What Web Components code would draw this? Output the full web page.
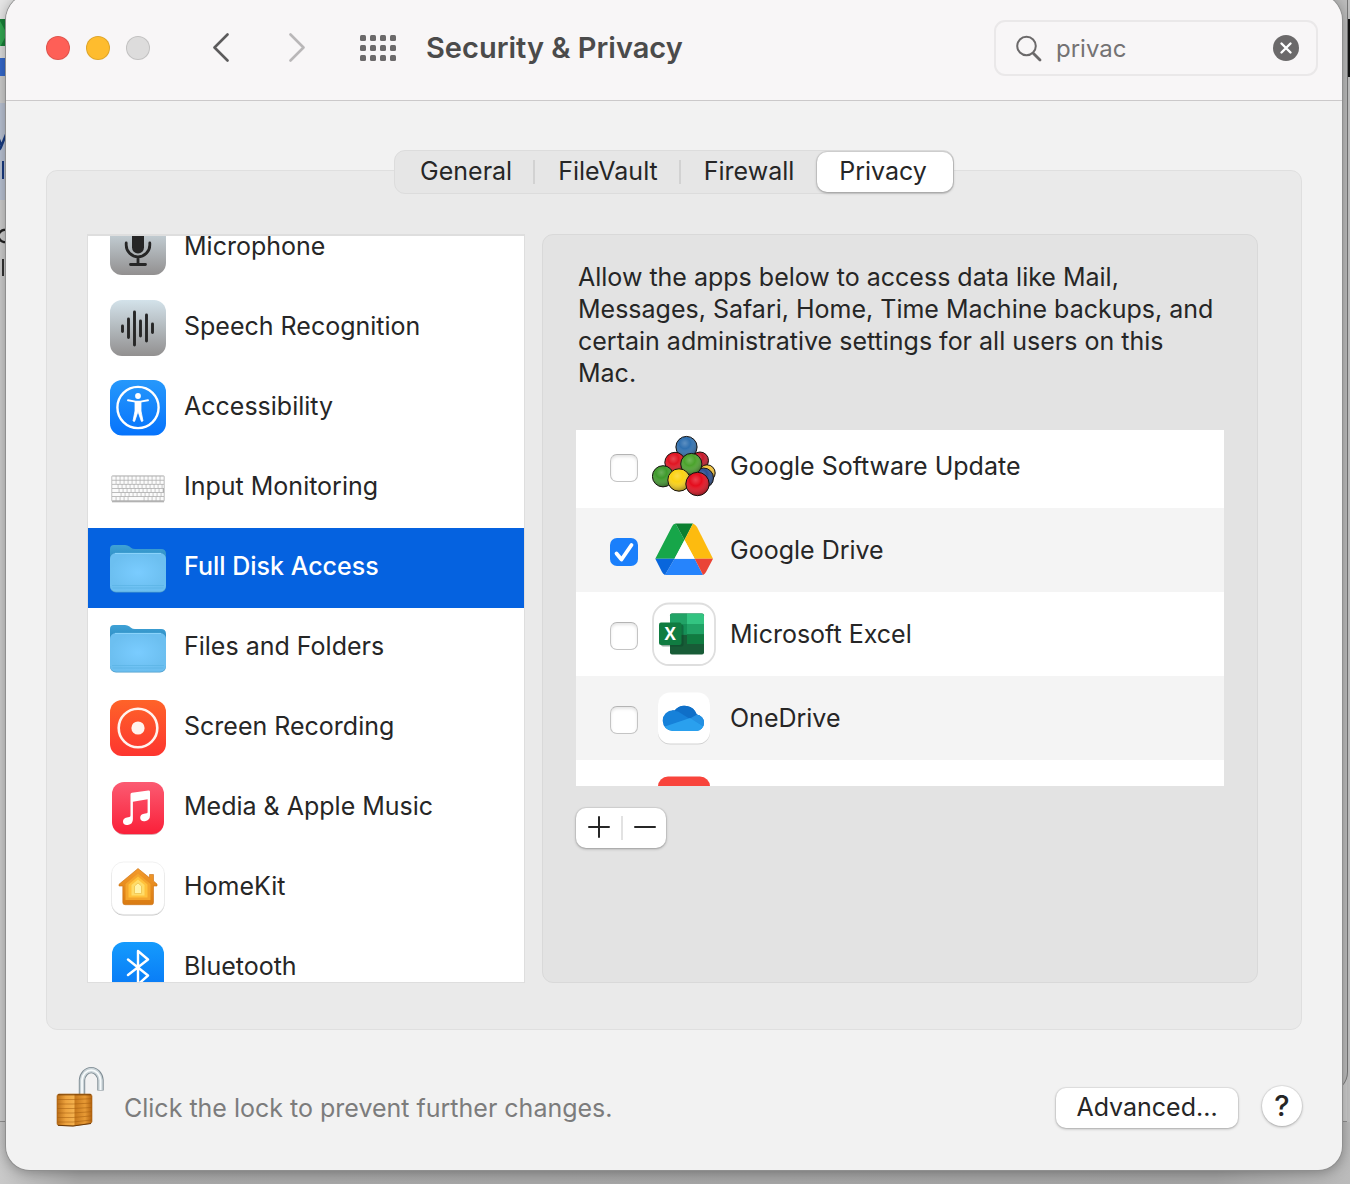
<!DOCTYPE html>
<html lang="en">
<head>
<meta charset="utf-8">
<title>Security &amp; Privacy</title>
<style>
  html, body { margin: 0; height: 100%; }
  body {
    font-family: Inter, "Liberation Sans", sans-serif;
    font-size: 25px;
    line-height: 32px;
    color: #262626;
    background: #a6a6a6;
    overflow: hidden;
  }
</style>
</head>
<body>
<desktop-stage>
  <mac-window>
    <window-toolbar slot="toolbar" heading="Security &amp; Privacy" query="privac"></window-toolbar>
    <segmented-tabs slot="tabs" items="General,FileVault,Firewall,Privacy" selected="Privacy"></segmented-tabs>
    <privacy-panel>
      <privacy-list slot="list">
        <privacy-item icon="microphone">Microphone</privacy-item>
        <privacy-item icon="speech">Speech Recognition</privacy-item>
        <privacy-item icon="accessibility">Accessibility</privacy-item>
        <privacy-item icon="keyboard">Input Monitoring</privacy-item>
        <privacy-item icon="folder" selected>Full Disk Access</privacy-item>
        <privacy-item icon="folder">Files and Folders</privacy-item>
        <privacy-item icon="record">Screen Recording</privacy-item>
        <privacy-item icon="music">Media &amp; Apple Music</privacy-item>
        <privacy-item icon="home">HomeKit</privacy-item>
        <privacy-item icon="bluetooth">Bluetooth</privacy-item>
      </privacy-list>
      <app-access slot="detail">
        <span slot="description">Allow the apps below to access data like Mail, Messages, Safari, Home, Time Machine backups, and certain administrative settings for all users on this Mac.</span>
        <app-row icon="updater">Google Software Update</app-row>
        <app-row icon="drive" checked>Google Drive</app-row>
        <app-row icon="excel">Microsoft Excel</app-row>
        <app-row icon="onedrive">OneDrive</app-row>
        <app-row icon="redapp"></app-row>
      </app-access>
    </privacy-panel>
    <window-footer slot="footer">Click the lock to prevent further changes.</window-footer>
  </mac-window>
</desktop-stage>

<script>
const define = (name, html, setup) => {
  const template = document.createElement('template');
  template.innerHTML = '<style>:host,*{box-sizing:border-box}button,input{font:inherit;color:inherit;margin:0}button{padding:0;border:0;background:none}svg{display:block}</style>' + html;
  customElements.define(name, class extends HTMLElement {
    constructor() {
      super();
      this.attachShadow({ mode: 'open' }).append(template.content.cloneNode(true));
    }
    connectedCallback() {
      if (setup && !this.ready) { this.ready = true; setup(this, this.shadowRoot); }
    }
  });
};

const gradient = (id, top, bottom) =>
  `<linearGradient id="${id}" x1="0" y1="0" x2="0" y2="1"><stop stop-color="${top}"/><stop offset="1" stop-color="${bottom}"/></linearGradient>`;
const ball = (x, y, r, color) =>
  `<circle cx="${x}" cy="${y}" r="${r}" fill="${color}"/><circle cx="${x}" cy="${y}" r="${r}" fill="url(#shine)" stroke="#16120f" stroke-width="1"/>`;
const keyRows = () => {
  let out = '';
  for (let row = 0; row < 6; row++) {
    const y = 16.5 + row * 4.1;
    const first = [3.5, 3.5, 5.5, 6.5, 8.5, 3.5][row];
    out += `<rect x="2.2" y="${y}" width="${first}" height="3.3"/>`;
    for (let x = 2.9 + first; x < 53; x += 4) {
      if (row === 5 && x > 18 && x < 34) continue;
      out += `<rect x="${x}" y="${y}" width="${Math.min(3.3, 53.8 - x)}" height="3.3"/>`;
    }
  }
  return out + '<rect x="18.4" y="37" width="15.3" height="3.3"/>';
};

const ICONS = {
  microphone: [56, `<defs>${gradient('g', '#d3e2ea', '#929090')}</defs><rect width="56" height="55" rx="12" fill="url(#g)"/>
    <rect x="22" y="5" width="12" height="28.500" rx="6" fill="#262626"/><path d="M16.200 23v2a11.800 11.800 0 0 0 23.600 0v-2M28 37v7M20.500 44.500h15" fill="none" stroke="#262626" stroke-width="2.800" stroke-linecap="round"/>`],
  speech: [56, `<defs>${gradient('g', '#d3e2ea', '#929090')}</defs><rect width="56" height="56" rx="12" fill="url(#g)"/>
    <path d="M12.500 26v5.500M18.500 19v18.500M24.500 12v33M30.500 21v15M36.500 15v26M42.500 24v8.500" stroke="#262626" stroke-width="2.900" stroke-linecap="round"/>`],
  accessibility: [56, `<defs>${gradient('g', '#2698fb', '#0673fc')}</defs><rect width="56" height="55.500" rx="12" fill="url(#g)"/>
    <circle cx="28" cy="27.500" r="20.600" fill="none" stroke="#fff" stroke-width="2.400"/><circle cx="28" cy="16" r="2.900" fill="#fff"/>
    <path d="M18 20.300l7.500 1.300h5l7.500-1.300" stroke="#fff" stroke-width="1.900" fill="none" stroke-linecap="round"/>
    <path d="M25 21.500h6v9.500l2 10-1.600.4-3.400-10-3.400 10-1.600-.4 2-10z" fill="#fff" stroke="#fff" stroke-width=".8" stroke-linejoin="round"/>`],
  keyboard: [56, `<rect x="1.500" y="15.500" width="53" height="26" rx="1.500" fill="#aeaeae" stroke="#cfcfcf" stroke-width=".8"/><path d="M2 41.800h52" stroke="#999" stroke-width=".8"/><g fill="#fbfbfb">${keyRows()}</g>`],
  folder: [56, `<defs>${gradient('g', '#3fa2d6', '#2583ba')}<radialGradient id="f"><stop stop-color="#7accff"/><stop offset="1" stop-color="#6cbff0"/></radialGradient></defs>
    <path d="M0 20V9q0-4 4-4h11q2.500 0 4.500 1.600l1.500 1.200Q22.500 9 25 9h26q5 0 5 5v12H0z" fill="url(#g)"/>
    <rect y="13" width="56" height="39.500" rx="6" fill="#4a9bc9"/><rect y="13" width="56" height="38.800" rx="6" fill="url(#f)"/><path d="M2 45.500h52M2.500 48h51" stroke="#5ab3e4" stroke-width=".7"/><path d="M5 13.400h46" stroke="#96dcff" stroke-width=".8"/>`],
  record: [56, `<defs>${gradient('g', '#fe6329', '#fd352f')}</defs><rect width="56" height="56" rx="12" fill="url(#g)"/>
    <circle cx="28" cy="28" r="19.300" fill="none" stroke="#fff3ee" stroke-width="2.600"/><circle cx="28" cy="28" r="6.600" fill="#fff3ee"/>`],
  music: [56, `<defs>${gradient('g', '#fb5b72', '#fa2039')}</defs><rect x="2.500" y="3.500" width="51" height="51.500" rx="12" fill="#d8a8ae"/><rect x="2" y="2" width="52" height="52" rx="12" fill="url(#g)"/>
    <path d="M20.500 14.500q0-1.400 1.400-1.700l16.500-2.300q1.600-.2 1.600 1.300v23.500q0 5.200-5 5.900-4.800.5-4.800-3.400 0-3.400 3.800-4.100l2.600-.5q1-.2 1-1.300V19.200l-14.700 2.500v17.500q0 5-5 5.700-4.900.6-4.900-3.400 0-3.300 3.900-4.100l2.500-.5q1.100-.2 1.100-1.400z" fill="#fff"/>`],
  home: [56, `<defs>${gradient('g', '#f39a2b', '#d97b12')}</defs><rect x="1.500" y="3.500" width="53" height="52" rx="12" fill="#c6c6c6"/><rect x="1.500" y="2" width="53" height="52.500" rx="12" fill="#fff" stroke="#e8e8e8" stroke-width=".6"/>
    <path d="M28 8.500L9 24.300v1.700h3.800v16.500q0 2.200 2.200 2.200h26.500q2 0 2-2.200V26H47v-2l-3.500-3V14.500h-4v3.300z" fill="url(#g)" stroke="#c96f12" stroke-width=".6" stroke-linejoin="round"/>
    <path d="M28 13.500L15.500 24v16h25V24z" fill="#f4a52d"/><path d="M28 16.500L18.500 24.500V37.500h19v-13z" fill="#ffc23c"/><path d="M28 19.500L21.500 25v10.500h13V25z" fill="#ffdc68"/><path d="M28 23l-3.500 3v7.500h7V26z" fill="#fff3a8" stroke="#edc34e" stroke-width=".8"/>`],
  bluetooth: [56, `<defs>${gradient('g', '#159bfd', '#0675f5')}</defs><rect x="2" y="2" width="52" height="52" rx="12" fill="url(#g)"/>
    <path d="M18 19.500l20 16L28 44.500v-33.500l10 8.500-20 15.500" fill="none" stroke="#fff" stroke-width="2.400" stroke-linejoin="round" stroke-linecap="round"/>`],
  updater: [64, `<defs><radialGradient id="shine" cx=".42" cy=".32" r=".75"><stop stop-color="#fff" stop-opacity=".22"/><stop offset=".35" stop-color="#fff" stop-opacity="0"/><stop offset="1" stop-color="#000" stop-opacity=".5"/></radialGradient></defs>
    ${ball(48, 26.5, 8.5, '#c5182a')}${ball(55, 39, 8.2, '#f5c53a')}${ball(51.5, 44, 10, '#2a4f91')}${ball(34.5, 13, 10.6, '#2f70b0')}${ball(23, 28.5, 10.2, '#e01522')}${ball(11, 42.3, 10.6, '#3f9a2c')}${ball(39.3, 30, 10.6, '#4ba32c')}${ball(27, 46, 11.2, '#fbd213')}${ball(45.5, 50, 11.7, '#e50d1d')}`],
  drive: [64, `<path d="M20 8.500L3.300 40.700H22.500L32.500 22 23.500 5.500Q21 6 20 8.500z" fill="#17a649"/>
    <path d="M23.500 5.500h17.500L32.500 22z" fill="#0b8030"/><path d="M41 5.500Q43.500 6.500 45 9l16 31.700H42.700L32.500 22z" fill="#fdbb0f"/>
    <path d="M22.500 40.700h20.200L51 57H13z" fill="#2684fc"/><path d="M3.300 40.700h19.200L13 57q-2-1-3-3z" fill="#0966dc"/><path d="M42.700 40.700H61L54 54q-1 2-3 3z" fill="#ea4436"/><path d="M32.500 22l10.200 18.700H22.500z" fill="#fff"/>`],
  excel: [64, `<rect x="1" y="1.500" width="62" height="61.500" rx="16" fill="#fff" stroke="#dedede" stroke-width="1.800"/>
    <rect x="18" y="11.500" width="34" height="41" rx="2" fill="#185c37"/><path d="M18 32.500V13.500q0-2 2-2h15v21z" fill="#21a366"/><path d="M35 11.500h15q2 0 2 2v8.500H35z" fill="#33c481"/><path d="M35 22h17v10.500H35z" fill="#21a366"/><path d="M18 22h17v10.500H18z" fill="#159057"/><path d="M35 32.500h17V42H35z" fill="#107c41"/>
    <rect x="9" y="22.500" width="22.500" height="22" rx="2" fill="#0b4527" opacity=".45"/><rect x="7" y="20.500" width="22.500" height="22.500" rx="2" fill="#107c41"/>
    <text x="18.200" y="37.500" text-anchor="middle" font-family="Open Sans, sans-serif" font-size="17" font-weight="700" fill="#fff">X</text>`],
  onedrive: [64, `<rect x="6" y="7.500" width="52" height="51" rx="12" fill="#d2d2d2"/><rect x="6" y="6.500" width="52" height="51" rx="12" fill="#fff"/>
    <clipPath id="c"><path d="M21 45a10.300 10.300 0 0 1 0-20.700q1 0 1.500.1a13 13 0 0 1 22.300 4.100A8.300 8.300 0 0 1 44.500 45z"/></clipPath>
    <g clip-path="url(#c)"><path d="M8 15h48v32H8z" fill="#1681d9"/><path d="M20 15h28v14.500l-10 3.500-12-7.500-6-1z" fill="#0f6fc8"/><path d="M38 32.500l7-4 12-1v16z" fill="#2490e2"/><path d="M10 41.500l28-9.500L54 42v5H10z" fill="#2aa0ee"/></g>`],
  redapp: [64, '<rect x="6" y="6.500" width="52" height="52" rx="10" fill="#f8443c"/>'],
};

define('mac-icon', `<style>:host{display:block;flex:none}</style><div></div>`, (el, root) => {
  const [size, body] = ICONS[el.getAttribute('name')];
  root.querySelector('div').innerHTML = `<svg width="${size}" height="${size}" viewBox="0 0 ${size} ${size}" aria-hidden="true">${body}</svg>`;
});

const placeIcon = (el, root) => {
  const icon = document.createElement('mac-icon');
  icon.setAttribute('name', el.getAttribute('icon'));
  root.querySelector('.icon').append(icon);
};

define('desktop-stage', `<style>
  :host{display:flex;position:relative;height:100vh;min-height:960px;overflow:hidden;isolation:isolate;background:linear-gradient(90deg,#c9c9c9 0,#a9a9a9 80px,#a4a4a4 90%,#bbb 100%)}
  .behind{position:absolute;z-index:-1;inset:0 2px 62px 0;background:#cdcdcd;border-bottom:1px solid #929292}
  .edge{position:absolute;z-index:-1;top:0;right:2px;bottom:92px;width:20px;background:#bdbdbd;border-right:1px solid #777;border-radius:0 0 20px 0}
  .far{position:absolute;z-index:-1;top:0;right:0;bottom:62px;width:3px;background:#c3c3c3}
  .far::before{content:"";position:absolute;top:19px;left:0;width:3px;height:58px;background:#111}
  svg{position:absolute;z-index:-1;top:0;left:0}
  slot{display:flex;flex:1}
</style>
<div class="behind"></div><div class="far"></div><div class="edge"></div>
<svg width="20" height="300" aria-hidden="true"><path d="M0 0h20v19H0z" fill="#e6e6e6"/><path d="M0 19h20v27H0z" fill="#188038"/><path d="M0 21l7 13-7 13z" fill="#34a853"/><path d="M0 46h20v12H0z" fill="#ddd"/><path d="M0 58h20v18H0z" fill="#3569cc"/><path d="M0 103h20v97H0z" fill="#b9c2d3"/>
<path d="M-4 132l5.500 13.500M7 132L1 147q-1 3-4 3" stroke="#173a80" stroke-width="2.400" fill="none"/><path d="M3 161v18" stroke="#173a80" stroke-width="2"/><path d="M8 231a6 6 0 1 0 0 10" stroke="#222" stroke-width="2.400" fill="none"/><path d="M3 259v17" stroke="#333" stroke-width="2"/></svg>
<slot></slot>`);

define('mac-window', `<style>
  :host{display:flex;flex-direction:column;flex:1;margin:-6px 8px 14px 6px;padding-top:6px;border-radius:26px 26px 24px 24px;overflow:hidden;box-shadow:0 0 0 1px #8f8f8f,0 2px 14px rgba(0,0,0,.35);background:linear-gradient(#f8f6f7 106px,#f2f2f2 106px)}
  main{flex:1;display:flex;flex-direction:column;padding:49px 40px 0;min-height:0}
  ::slotted([slot=tabs]){align-self:center;margin-bottom:-24px}
</style><slot name="toolbar"></slot><main><slot name="tabs"></slot><slot></slot></main><slot name="footer"></slot>`);

define('window-toolbar', `<style>
  :host{display:flex;align-items:center;height:101px;padding:0 24px 5px 40px;border-bottom:1px solid #cbc9ca;flex:none}
  .lights{display:flex;gap:16px}
  .lights button{width:24px;height:24px;border-radius:50%;border:1px solid rgba(0,0,0,.12)}
  .nav{display:flex;gap:60px;margin:0 55px 0 63px}
  h1{margin:0 auto 0 30px;font-size:29px;line-height:36px;font-weight:600;color:#4b4b4b;white-space:nowrap}
  label{display:flex;align-items:center;width:324px;height:56px;padding:0 17px 0 20px;border:2px solid #eae8e9;border-radius:11px;color:#6e6c6d}
  input{flex:1;min-width:0;border:0;outline:0;background:none;padding:2px 0 0;margin-left:14px;font-size:24px;color:#747273}
</style>
<div class="lights"><button aria-label="Close" style="background:#fe5f57"></button><button aria-label="Minimize" style="background:#febc2e"></button><button aria-label="Zoom" style="background:#dddcdc"></button></div>
<div class="nav"><button aria-label="Back"><svg width="16" height="30" viewBox="0 0 16 30"><path d="M14.500 1.500L1.500 14.500 14.500 27.500" fill="none" stroke="#5c5b5c" stroke-width="2.600" stroke-linecap="round" stroke-linejoin="round"/></svg></button>
<button aria-label="Forward"><svg width="16" height="30" viewBox="0 0 16 30"><path d="M1.500 1.500L14.500 14.500 1.500 27.500" fill="none" stroke="#b9b7b8" stroke-width="2.600" stroke-linecap="round" stroke-linejoin="round"/></svg></button></div>
<button aria-label="Show all"><svg class="grid" width="36" height="28" viewBox="0 0 36 28" fill="#6b696a"></svg></button>
<h1></h1>
<label><svg width="26" height="28" viewBox="0 0 26 28" fill="none" stroke="#6b696a" stroke-linecap="round"><circle cx="10.500" cy="12" r="9.300" stroke-width="2"/><path d="M17.500 19.500l6.500 6.500" stroke-width="2.800"/></svg>
<input type="text" aria-label="Search">
<button aria-label="Clear search"><svg width="26" height="26" viewBox="0 0 26 26"><circle cx="13" cy="13" r="13" fill="#6b696a"/><path d="M8.500 8.500l9 9m0-9l-9 9" stroke="#fff" stroke-width="2.400" stroke-linecap="round"/></svg></button></label>`, (el, root) => {
  root.querySelector('h1').textContent = el.getAttribute('heading');
  root.querySelector('input').value = el.getAttribute('query');
  let dots = '';
  for (let y = 0; y < 3; y++) for (let x = 0; x < 4; x++) dots += `<rect x="${x * 10}" y="${1 + y * 10}" width="6" height="6" rx="1.500"/>`;
  root.querySelector('.grid').innerHTML = dots;
});

define('segmented-tabs', `<style>
  :host{display:flex;position:relative;height:44px;padding:1px 0;border:1px solid #dcdcdc;border-radius:11px;background:#e6e6e6}
  button{position:relative;height:40px;padding:0 23px 2px;border-radius:10px}
  button:first-of-type{padding-left:25px}
  button[aria-selected=true]{background:#fff;box-shadow:0 0 0 1px rgba(0,0,0,.07),0 1px 3px rgba(0,0,0,.3);padding:0 26px 2px 22px}
  .rule::after{content:"";position:absolute;right:0;top:8px;width:2px;height:24px;background:#d2d2d2}
</style>`, (el, root) => {
  el.setAttribute('role', 'tablist');
  const names = el.getAttribute('items').split(',');
  names.forEach((name, i) => {
    const tab = document.createElement('button');
    tab.textContent = name;
    tab.setAttribute('role', 'tab');
    tab.setAttribute('aria-selected', name === el.getAttribute('selected'));
    if (i < names.length - 2) tab.className = 'rule';
    root.append(tab);
  });
});

define('privacy-panel', `<style>
  :host{flex:1;min-height:0;display:grid;grid-template:minmax(0,1fr)/438px minmax(0,1fr);gap:17px;padding:63px 43px 46px 40px;border:1px solid #dfdfdf;border-radius:11px;background:#eaeaea}
</style><slot name="list"></slot><slot name="detail"></slot>`);

define('privacy-list', `<style>
  :host{display:block;overflow:hidden;border:1px solid #dedede;border-top-width:2px;background:#fff}
  div{margin-top:-28px}
</style><div role="list"><slot></slot></div>`);

define('privacy-item', `<style>
  :host{display:block}
  button{display:flex;align-items:center;gap:18px;width:100%;height:80px;padding:0 22px;text-align:left}
  .name{padding-bottom:4px;line-height:20px;white-space:nowrap}
  :host([selected]) button{background:#0562e0;color:#fff}
  :host([selected]) .name{font-weight:500}
</style><button><span class="icon"></span><span class="name"><slot></slot></span></button>`, (el, root) => {
  el.setAttribute('role', 'listitem');
  placeIcon(el, root);
});

define('app-access', `<style>
  :host{display:block;padding:26px 33px;border:1px solid #d9d9d9;border-radius:11px;background:#e3e3e3}
  p{margin:0 0 41px 2px}
  .apps{height:356px;overflow:hidden;background:#fff}
  .rows{margin-top:-6px}
  .edit{display:flex;align-items:center;width:90px;margin-top:22px;height:40px;background:#fff;border-radius:10px;box-shadow:0 0 0 1px rgba(0,0,0,.05),0 1px 3px rgba(0,0,0,.3)}
  .edit button{display:grid;place-items:center;width:45px;height:24px}
  .edit button+button{border-left:2px solid #e2e2e2}
  ::slotted(app-row:nth-of-type(even)){background:#f4f4f4}
</style>
<p><slot name="description"></slot></p>
<div class="apps"><div class="rows"><slot></slot></div></div>
<div class="edit"><button aria-label="Add"><svg width="22" height="24" viewBox="0 0 22 24"><path d="M1 11h20M11 1v20" stroke="#262626" stroke-width="2" stroke-linecap="round"/></svg></button><button aria-label="Remove"><svg width="22" height="24" viewBox="0 0 22 24"><path d="M1 11h20" stroke="#262626" stroke-width="2" stroke-linecap="round"/></svg></button></div>`);

define('app-row', `<style>
  :host{display:block}
  label{display:flex;align-items:center;gap:14px;height:84px;padding:0 34px}
  input{appearance:none;width:28px;height:28px;margin-top:4px;border:1px solid #c4c4c4;border-top-color:#b4b4b4;border-radius:7px;background:#fff;box-shadow:inset 0 2px 3px rgba(0,0,0,.1)}
  input:checked{border:0;box-shadow:none;background:#1a7ffb}
  .box{display:grid}
  .box>*{grid-area:1/1}
  .box svg{display:none;margin-top:4px}
  input:checked+svg{display:block}
</style><label><span class="box"><input type="checkbox"><svg width="28" height="28" viewBox="0 0 28 28"><path d="M6.500 15.500l5 6L21.500 7" fill="none" stroke="#fff" stroke-width="3.800" stroke-linecap="round" stroke-linejoin="round"/></svg></span><span class="icon"></span><span><slot></slot></span></label>`, (el, root) => {
  placeIcon(el, root);
  const box = root.querySelector('input');
  box.checked = el.hasAttribute('checked');
  if (!el.textContent) { root.querySelector('.box').style.visibility = 'hidden'; box.setAttribute('aria-label', 'App'); }
});

define('window-footer', `<style>
  :host{display:flex;align-items:center;height:140px;padding:16px 40px 0 50px;flex:none}
  .lock{margin:-22px 20px 0 0}
  .note{margin-right:auto;color:#7c7c7c}
  .adv,.help{height:40px;background:#fff;box-shadow:0 0 0 1px rgba(0,0,0,.05),0 1px 3px rgba(0,0,0,.28)}
  .adv{width:182px;border-radius:10px;padding-bottom:2px}
  .help{width:40px;border-radius:50%;margin:-4px 0 0 24px;font-weight:500;font-size:29px}
</style>
<button class="lock" aria-label="Lock"><svg width="48" height="64" viewBox="0 0 48 64"><defs><linearGradient id="a"><stop stop-color="#b96d17"/><stop offset=".25" stop-color="#eda23d"/><stop offset=".48" stop-color="#f3b14e"/><stop offset=".52" stop-color="#c87a1d"/><stop offset=".8" stop-color="#e79a35"/><stop offset="1" stop-color="#b3630f"/></linearGradient></defs>
<path d="M26 31V15a9.300 11 0 0 1 18.500 0v10.500" fill="none" stroke="#7d8a92" stroke-width="6.400"/><path d="M26 31V15a9.300 11 0 0 1 18.500 0v10" fill="none" stroke="#c9d3d7" stroke-width="4.600"/><path d="M26 31V15a9.300 11 0 0 1 18.500 0v10" fill="none" stroke="#f6fafb" stroke-width="1.800"/>
<path d="M1 31q0-1.500 2-2h31q1.500 0 2 2v25.500q0 1.500-2 2L17 61 3 60.500q-2 0-2-2z" fill="url(#a)" stroke="#a8600f" stroke-width=".6"/><path d="M2 29.800h33" stroke="#7a4208" stroke-width="1"/>
<path d="M1.500 34.500H17l18.500-.8M1.500 39H17l18.500-.9M1.500 43.500H17l18.500-1M1.500 48H17l18.500-1.300M1.500 52.500H17l18.500-1.600M1.500 57H17l18.500-2" fill="none" stroke="#a25a0c" stroke-opacity=".5" stroke-width="1"/><path d="M2 60.300l15 .7 18-2.500" fill="none" stroke="#6b3906"/></svg></button>
<span class="note"><slot></slot></span><button class="adv">Advanced...</button><button class="help" aria-label="Help">?</button>`);
</script>
</body>
</html>
